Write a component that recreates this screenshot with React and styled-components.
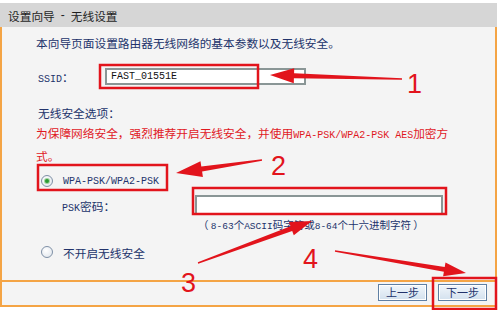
import styled, { createGlobalStyle } from "styled-components";

const ORANGE = "#f4a445";
const NAVY = "#22336b";
const RED = "#e2141c";

const GlobalStyle = createGlobalStyle`
  html, body {
    margin: 0;
    padding: 0;
    background: #fff;
  }
  body {
    font-family: "Noto Sans CJK SC", "Liberation Sans", sans-serif;
  }
`;

const Stage = styled.div`
  position: relative;
  width: 500px;
  height: 310px;
  padding-top: 3px;
  box-sizing: border-box;
  background: #fff;
  overflow: hidden;
`;

const Panel = styled.div`
  width: 497px;
`;

const TitleBar = styled.div`
  height: 24px;
  background: #d6d6d6;
  display: flex;
  align-items: center;
  gap: 6px;
  padding-left: 8px;
  font-size: 11.7px;
  color: #1f1f1f;
`;

const Dash = styled.span`
  font-family: "Liberation Sans", sans-serif;
  font-size: 12px;
`;

const Content = styled.div`
  height: 255px;
  box-sizing: border-box;
  border: 2px solid ${ORANGE};
  border-top: 0;
  background: #f4f4f4;
  padding: 6px 0 0 34px;
  display: flex;
  flex-direction: column;
  color: ${NAVY};
  font-size: 11.7px;
`;

const Latin = styled.span`
  font-family: "Liberation Mono", monospace;
  font-size: ${(p) => p.$size || 10}px;
`;

const Intro = styled.div`
  line-height: 20px;
`;

const FieldRow = styled.div`
  display: flex;
  align-items: center;
  height: ${(p) => p.$h}px;
  margin-top: ${(p) => p.$mt}px;
  padding-left: ${(p) => p.$pl}px;
`;

const FieldLabel = styled.span`
  width: ${(p) => p.$w}px;
  flex-shrink: 0;
  white-space: nowrap;
`;

const TextBox = styled.input`
  box-sizing: border-box;
  width: ${(p) => p.$w}px;
  height: ${(p) => p.$h}px;
  margin: 0;
  padding: 0 4px;
  border: 2px solid #8a9696;
  background: #fff;
  font: 10px "Liberation Mono", monospace;
  color: #111;
  outline: none;
`;

const SectionLabel = styled.div`
  line-height: 20px;
  margin-top: 15px;
  padding-left: 2px;
`;

const Warning = styled.div`
  line-height: 20px;
  color: #e0191f;
  white-space: nowrap;
`;

const OptionRow = styled.label`
  display: flex;
  align-items: center;
  gap: 10px;
  height: ${(p) => p.$h}px;
  margin-top: ${(p) => p.$mt}px;
  padding-left: 5px;
`;

const Radio = styled.span`
  position: relative;
  width: 12px;
  height: 12px;
  box-sizing: border-box;
  border-radius: 50%;
  border: 1px solid #7f90a6;
  background: radial-gradient(circle at 40% 35%, #ffffff, #dde3ea);
  flex-shrink: 0;

  &::after {
    content: "";
    display: ${(p) => (p.$checked ? "block" : "none")};
    position: absolute;
    left: 3px;
    top: 3px;
    width: 4px;
    height: 4px;
    border-radius: 50%;
    background: #2c9a34;
    box-shadow: 0 0 0 1px #9fd49f;
  }
`;

const Hint = styled.div`
  line-height: 16px;
  margin-top: 1px;
  padding-left: 162px;
  font-size: 10.5px;
`;

const Footer = styled.div`
  height: 25px;
  box-sizing: border-box;
  border: 2px solid ${ORANGE};
  border-top: 0;
  background: #f4f4f4;
  display: flex;
  justify-content: flex-end;
  align-items: center;
  gap: 11px;
  padding: 0 8px 3px 0;
`;

const WizardButton = styled.button`
  width: 49px;
  height: 17px;
  margin: 0;
  padding: 0;
  border: 1px solid #5f7fa3;
  background: linear-gradient(#f1f6fb, #d3e1ee);
  color: ${NAVY};
  font-family: "Noto Sans CJK SC", sans-serif;
  font-size: 11px;
  line-height: 15px;
  box-shadow: inset 0 0 0 1px #ffffff;
`;

const Overlay = styled.svg`
  position: absolute;
  left: 0;
  top: 0;
  pointer-events: none;
`;

const Number = styled.text`
  font-family: "Liberation Sans", Arial, sans-serif;
  font-size: 27px;
  fill: ${RED};
`;

function arrowPoints(x1, y1, x2, y2, shaft, head, len) {
  const dx = x2 - x1;
  const dy = y2 - y1;
  const L = Math.hypot(dx, dy);
  const ux = dx / L;
  const uy = dy / L;
  const nx = -uy;
  const ny = ux;
  const bx = x2 - ux * len;
  const by = y2 - uy * len;
  const pts = [
    [x1 + nx * 0.7, y1 + ny * 0.7],
    [bx + (nx * shaft) / 2, by + (ny * shaft) / 2],
    [bx + (nx * head) / 2, by + (ny * head) / 2],
    [x2, y2],
    [bx - (nx * head) / 2, by - (ny * head) / 2],
    [bx - (nx * shaft) / 2, by - (ny * shaft) / 2],
    [x1 - nx * 0.7, y1 - ny * 0.7],
  ];
  return pts.map((p) => p.map((v) => v.toFixed(1)).join(",")).join(" ");
}

const boxes = [
  { x: 100, y: 65, w: 158, h: 23 },
  { x: 38, y: 165, w: 129, h: 25 },
  { x: 193, y: 188, w: 253, h: 26 },
  { x: 433, y: 278, w: 63, h: 31 },
];

const arrows = [
  [402, 79, 270, 75, 5, 15, 24],
  [262, 160, 176, 173, 5, 16, 26],
  [198, 263, 312, 221, 5, 14, 22],
  [335, 251, 466, 273, 5, 14, 22],
];

const numbers = [
  { n: "1", x: 407, y: 93 },
  { n: "2", x: 271, y: 175 },
  { n: "3", x: 181, y: 292 },
  { n: "4", x: 303, y: 268 },
];

export default function App() {
  return (
    <>
      <GlobalStyle />
      <Stage>
        <Panel>
          <TitleBar>
            <span>设置向导</span>
            <Dash>-</Dash>
            <span>无线设置</span>
          </TitleBar>
          <Content>
            <Intro>本向导页面设置路由器无线网络的基本参数以及无线安全。</Intro>
            <FieldRow $h={24} $mt={11} $pl={2}>
              <FieldLabel $w={67}>
                <Latin>SSID</Latin>：
              </FieldLabel>
              <TextBox $w={201} $h={17} defaultValue="FAST_01551E" />
            </FieldRow>
            <SectionLabel>无线安全选项：</SectionLabel>
            <Warning>
              为保障网络安全，强烈推荐开启无线安全，并使用
              <Latin>WPA-PSK/WPA2-PSK AES</Latin>加密方
              <br />
              式。
            </Warning>
            <OptionRow $h={24} $mt={3}>
              <Radio $checked />
              <Latin>WPA-PSK/WPA2-PSK</Latin>
            </OptionRow>
            <FieldRow $h={22} $mt={1} $pl={26}>
              <FieldLabel $w={133}>
                <Latin>PSK</Latin>密码：
              </FieldLabel>
              <TextBox $w={248} $h={20} defaultValue="" />
            </FieldRow>
            <Hint>
              （ <Latin $size={9.5}>8-63</Latin>个<Latin $size={9.5}>ASCII</Latin>码字符或
              <Latin $size={9.5}>8-64</Latin>个十六进制字符 ）
            </Hint>
            <OptionRow $h={20} $mt={7}>
              <Radio />
              不开启无线安全
            </OptionRow>
          </Content>
          <Footer>
            <WizardButton type="button">上一步</WizardButton>
            <WizardButton type="button">下一步</WizardButton>
          </Footer>
        </Panel>
        <Overlay width="500" height="310" viewBox="0 0 500 310">
          {boxes.map((b, i) => (
            <rect
              key={i}
              x={b.x}
              y={b.y}
              width={b.w}
              height={b.h}
              fill="none"
              stroke={RED}
              strokeWidth="2.5"
            />
          ))}
          {arrows.map((a, i) => (
            <polygon key={i} points={arrowPoints(...a)} fill={RED} />
          ))}
          {numbers.map((d) => (
            <Number key={d.n} x={d.x} y={d.y}>
              {d.n}
            </Number>
          ))}
        </Overlay>
      </Stage>
    </>
  );
}
